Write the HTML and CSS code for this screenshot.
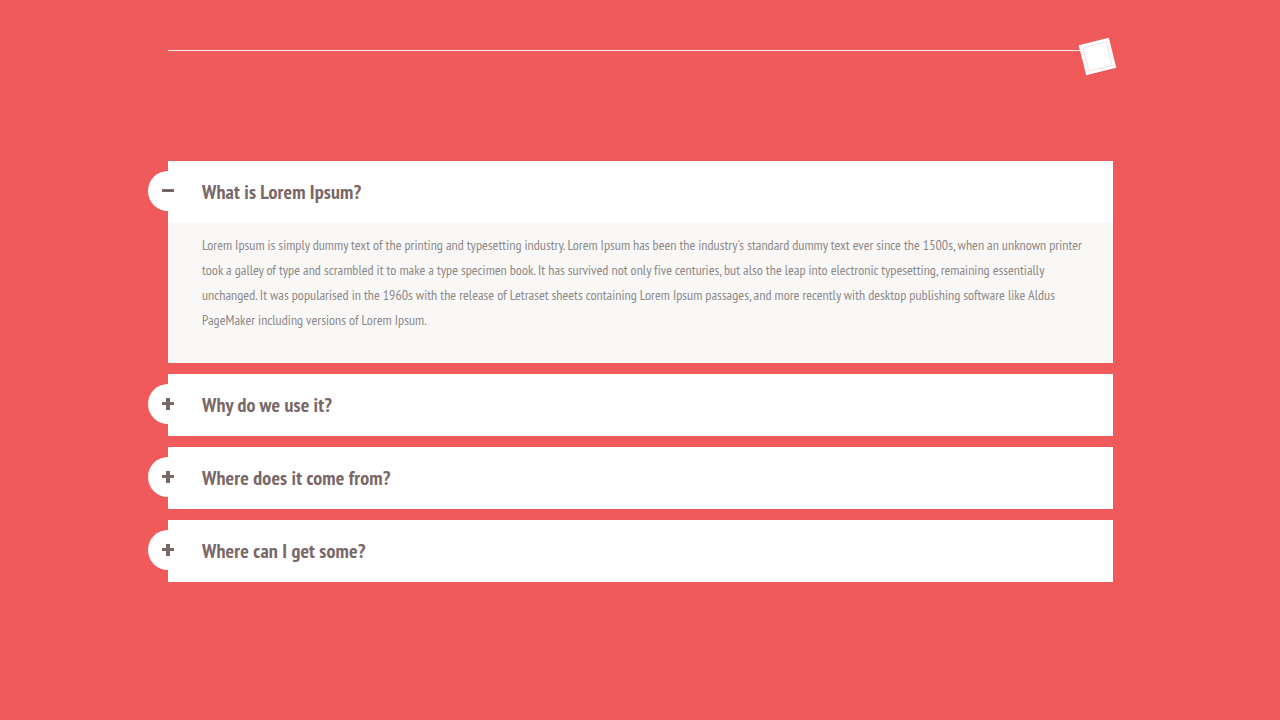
FILE: index.html
```html
<!DOCTYPE html>
<html lang="en">
<head>
<meta charset="utf-8">
<title>FAQ Accordion</title>
<link rel="stylesheet" href="styles.css">
</head>
<body>
<div class="page">
  <header class="topbar">
    <div class="rule"></div>
    <div class="stamp"><div class="stamp-inner"></div></div>
  </header>

  <section class="accordion">
    <div class="item open">
      <div class="head">
        <span class="toggle"><span class="bar h"></span></span>
        <h3>What is Lorem Ipsum?</h3>
      </div>
      <div class="body">
        <p>Lorem Ipsum is simply dummy text of the printing and typesetting industry. Lorem Ipsum has been the industry's standard dummy text ever since the 1500s, when an unknown printer took a galley of type and scrambled it to make a type specimen book. It has survived not only five centuries, but also the leap into electronic typesetting, remaining essentially unchanged. It was popularised in the 1960s with the release of Letraset sheets containing Lorem Ipsum passages, and more recently with desktop publishing software like Aldus PageMaker including versions of Lorem Ipsum.</p>
      </div>
    </div>
    <div class="item">
      <div class="head">
        <span class="toggle"><span class="bar h"></span><span class="bar v"></span></span>
        <h3>Why do we use it?</h3>
      </div>
    </div>
    <div class="item">
      <div class="head">
        <span class="toggle"><span class="bar h"></span><span class="bar v"></span></span>
        <h3>Where does it come from?</h3>
      </div>
    </div>
    <div class="item">
      <div class="head">
        <span class="toggle"><span class="bar h"></span><span class="bar v"></span></span>
        <h3>Where can I get some?</h3>
      </div>
    </div>
  </section>
</div>
</body>
</html>
```
FILE: styles.css
```css
html, body {
  margin: 0;
  padding: 0;
}
body {
  background: #f15a5b;
  font-family: "PT Sans Narrow", "Liberation Sans Narrow", "Roboto", sans-serif;
  height: 720px;
  overflow: hidden;
}
.page {
  width: 945px;
  margin: 0 auto 0 168px;
  padding-top: 38px;
}
.topbar {
  display: flex;
  align-items: center;
  height: 36px;
}
.rule {
  flex: 1;
  height: 1px;
  background: rgba(255,255,255,0.9);
  margin-top: -12px;
}
.stamp {
  width: 31px;
  height: 31px;
  background: #fff;
  transform: rotate(-14deg);
  margin-left: -18px;
  margin-right: 0;
  box-shadow: 0 1px 2px rgba(0,0,0,0.06);
  display: flex;
  align-items: center;
  justify-content: center;
}
.stamp-inner {
  width: 25px;
  height: 25px;
  border: 1px solid #f7dede;
  box-sizing: border-box;
}
.accordion {
  margin-top: 87px;
  display: flex;
  flex-direction: column;
  gap: 11px;
}
.item {
  background: #fff;
}
.head {
  height: 62px;
  display: flex;
  align-items: center;
  position: relative;
  padding-left: 34px;
}
.toggle {
  position: absolute;
  left: -20px;
  top: 10px;
  width: 40px;
  height: 40px;
  border-radius: 50%;
  background: #fff;
}
.bar {
  position: absolute;
  background: #7a6767;
}
.bar.h {
  left: 14px;
  top: 18px;
  width: 12px;
  height: 3px;
}
.bar.v {
  left: 18px;
  top: 14px;
  width: 4px;
  height: 12px;
}
h3 {
  margin: 0;
  font-size: 20px;
  letter-spacing: 0.15px;
  font-weight: bold;
  color: #7a6767;
}
.body {
  background: #f9f8f7;
  padding: 10px 20px 30px 34px;
}
.body p {
  margin: 0;
  font-size: 14px;
  letter-spacing: 0.03px;
  line-height: 25px;
  color: #8d8888;
}
```
